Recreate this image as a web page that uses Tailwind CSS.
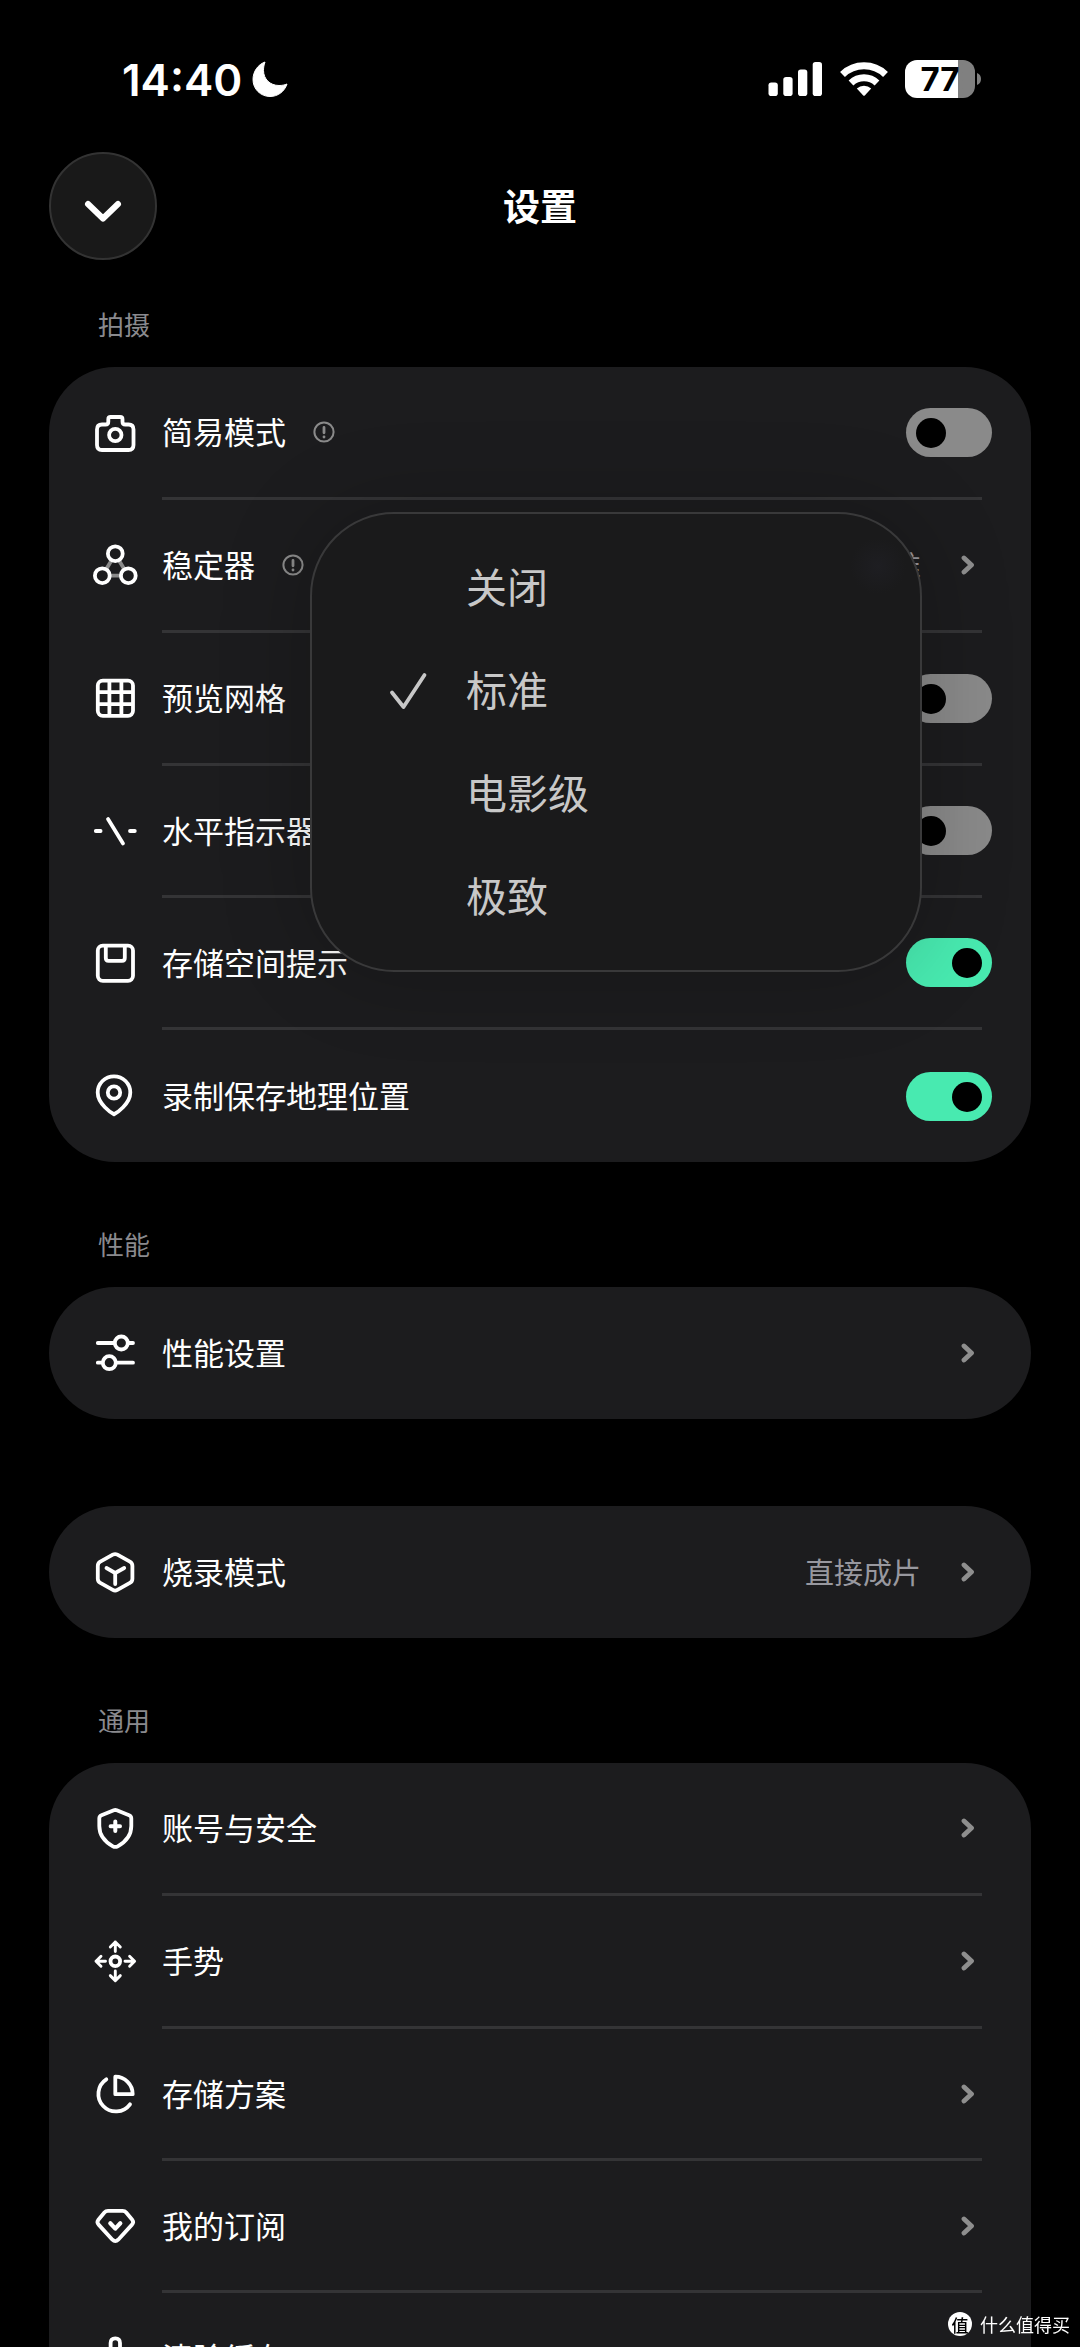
<!DOCTYPE html>
<html lang="zh-CN">
<head>
    <meta charset="UTF-8">
    <meta name="viewport" content="width=device-width, initial-scale=1.0">
    <title>设置</title>
    <script src="https://cdn.jsdelivr.net/npm/@tailwindcss/browser@4"></script>
</head>
<body class="h-screen overflow-hidden bg-black text-white font-['Noto_Sans_CJK_SC',sans-serif]">
    <!-- Shared icons -->
    <svg class="hidden">
        <symbol id="chevron" viewBox="0 0 14 20">
            <path d="M3 3l7.5 7L3 17" fill="none" stroke="currentColor" stroke-width="4.8" stroke-linecap="round" stroke-linejoin="round"/>
        </symbol>
        <symbol id="info" viewBox="0 0 22 22">
            <circle cx="11" cy="11" r="9.6" fill="none" stroke="currentColor" stroke-width="2"/>
            <path d="M11 6.4v5.4M11 15.8v.2" fill="none" stroke="currentColor" stroke-width="2.8" stroke-linecap="round"/>
        </symbol>
    </svg>

    <!-- Status bar -->
    <div class="flex h-38 items-center justify-between pt-1.5 pl-[122px] pr-[99px]">
        <div class="flex items-center gap-2.5">
            <span class="pt-0.5 font-['Inter',sans-serif] text-[44px] leading-none font-semibold">14:40</span>
            <svg class="size-9" viewBox="0 0 36 36" fill="currentColor">
                <path d="M13 1C12 4 11.500 6 11.500 9.500C11.500 18 18 24.500 27 24.500C30 24.500 32.500 24 35 23C32.500 30.500 26 35.500 18 35.500C8.500 35.500 1 28 1 18.500C1 10.500 6 3.500 13 1Z" stroke="currentColor" stroke-width="1" stroke-linejoin="round"/>
            </svg>
        </div>
        <div class="flex items-center gap-[17px]">
            <svg class="h-[36px] w-[55px]" viewBox="0 0 55 36" fill="currentColor">
                <rect x="0.500" y="21.500" width="9.300" height="13.500" rx="2.800"/>
                <rect x="15.300" y="16" width="9.300" height="19" rx="2.800"/>
                <rect x="30" y="8.500" width="9.300" height="26.500" rx="2.800"/>
                <rect x="44.700" y="1" width="9.300" height="34" rx="2.800"/>
            </svg>
            <svg class="h-[36px] w-[48px]" viewBox="0 0 48 36">
                <g fill="none" stroke="currentColor" stroke-width="7">
                    <path d="M2.500 13.500A31 31 0 0 1 45.500 13.500"/>
                    <path d="M11 22A19 19 0 0 1 37 22"/>
                </g>
                <path d="M16.800 27.500A11 11 0 0 1 31.200 27.500L25 34.200Q24 35.200 23 34.200Z" fill="currentColor"/>
            </svg>
            <div class="flex items-center gap-0.5">
                <div class="flex h-[38px] w-[70px] items-center justify-center rounded-[12px] bg-linear-to-r from-white from-76% to-[#808080] to-76% font-['Inter',sans-serif] text-[33px] leading-none font-bold text-black">77</div>
                <svg class="h-3 w-1" viewBox="0 0 4 12"><path d="M0 0Q4 1.500 4 6T0 12Z" fill="#808080"/></svg>
            </div>
        </div>
    </div>

    <!-- Header -->
    <header class="grid grid-cols-3 items-center px-[49px]">
        <button type="button" aria-label="返回" class="flex size-27 items-center justify-center rounded-full border-2 border-[#333333] bg-[#191919]">
            <svg class="size-12" viewBox="0 0 48 48" fill="none" stroke="currentColor" stroke-width="6" stroke-linecap="round" stroke-linejoin="round">
                <path d="M9 22l15 14.500L39 22"/>
            </svg>
        </button>
        <h1 class="pb-0.5 text-center text-[37px] leading-[54px] font-bold">设置</h1>
    </header>

    <main class="px-[49px]">
        <!-- Capture -->
        <h2 class="mt-[44px] mb-[23px] pl-[49px] text-[26px] leading-[40px] text-[#8a8a8e]">拍摄</h2>
        <section class="relative rounded-[66px] bg-[#1c1c1e]">
            <div class="flex h-[130px] items-center pl-[42px] pr-[39px]">
                <svg class="mr-[23px] size-12" viewBox="0 0 48 48" fill="none" stroke="currentColor" stroke-width="3.8" stroke-linejoin="round">
                    <path d="M11 16.500h3.500q2.800 0 2.800-2.800v-2.400q0-2.300 2.300-2.300h9.600q2.300 0 2.300 2.300v2.400q0 2.800 2.800 2.800H37.500q5 0 5 5V37q0 5-5 5H11q-5 0-5-5V21.500q0-5 5-5Z"/>
                    <circle cx="24.300" cy="27" r="6.200"/>
                </svg>
                <label for="simple-mode" class="pb-0.5 text-[31px] leading-[46px]">简易模式</label>
                <svg class="ml-[27px] size-[22px] text-[#8a8a8a]"><use href="#info"/></svg>
                <input id="simple-mode" type="checkbox" role="switch" class="relative ml-auto h-[49px] w-[86px] appearance-none rounded-full bg-[#8a8a8a] before:absolute before:top-[10px] before:left-[10px] before:size-[30px] before:rounded-full before:bg-black checked:bg-[#48eab0] checked:before:left-[46px]">
            </div>
            <hr class="ml-[113px] mr-[49px] border-t-3 border-[#343436]">
            <a href="#" class="flex h-[130px] items-center pl-[42px] pr-[56px]">
                <svg class="mr-[23px] size-12" viewBox="0 0 48 48" fill="none" stroke="currentColor" stroke-width="3.8">
                    <path d="M20.500 19.500l-5.500 9M28 19.500l5.500 9M19 34.700h10.500" stroke="#8a8a8a"/>
                    <circle cx="24.300" cy="12.700" r="7.400"/>
                    <circle cx="11.300" cy="34.700" r="7.400"/>
                    <circle cx="37.300" cy="34.700" r="7.400"/>
                </svg>
                <span class="pb-0.5 text-[31px] leading-[46px]">稳定器</span>
                <svg class="ml-[27px] size-[22px] text-[#8a8a8a]"><use href="#info"/></svg>
                <span class="ml-auto pb-0.5 text-[29px] leading-[42px] text-[#98989f]">标准</span>
                <svg class="ml-[40px] h-5 w-3.5 text-[#8e8e8e]"><use href="#chevron"/></svg>
            </a>
            <hr class="ml-[113px] mr-[49px] border-t-3 border-[#343436]">
            <div class="flex h-[130px] items-center pl-[42px] pr-[39px]">
                <svg class="mr-[23px] size-12" viewBox="0 0 48 48" fill="none" stroke="currentColor" stroke-width="3.8">
                    <rect x="6.800" y="6.600" width="35.200" height="35.200" rx="5"/>
                    <path d="M18.400 6v36M30.400 6v36M6 18.200h36M6 30.200h36"/>
                </svg>
                <label for="grid" class="pb-0.5 text-[31px] leading-[46px]">预览网格</label>
                <input id="grid" type="checkbox" role="switch" class="relative ml-auto h-[49px] w-[86px] appearance-none rounded-full bg-[#8a8a8a] before:absolute before:top-[10px] before:left-[10px] before:size-[30px] before:rounded-full before:bg-black checked:bg-[#48eab0] checked:before:left-[46px]">
            </div>
            <hr class="ml-[113px] mr-[49px] border-t-3 border-[#343436]">
            <div class="flex h-[129px] items-center pl-[42px] pr-[39px]">
                <svg class="mr-[23px] size-12" viewBox="0 0 48 48" fill="none" stroke="currentColor" stroke-width="3.800" stroke-linecap="round">
                    <path d="M4.800 24h4.800M39 24h4.800M17 12l15 24.500"/>
                </svg>
                <label for="level" class="pb-0.5 text-[31px] leading-[46px]">水平指示器</label>
                <input id="level" type="checkbox" role="switch" class="relative ml-auto h-[49px] w-[86px] appearance-none rounded-full bg-[#8a8a8a] before:absolute before:top-[10px] before:left-[10px] before:size-[30px] before:rounded-full before:bg-black checked:bg-[#48eab0] checked:before:left-[46px]">
            </div>
            <hr class="ml-[113px] mr-[49px] border-t-3 border-[#343436]">
            <div class="flex h-[129px] items-center pl-[42px] pr-[39px]">
                <svg class="mr-[23px] size-12" viewBox="0 0 48 48" fill="none" stroke="currentColor" stroke-width="3.800" stroke-linejoin="round">
                    <rect x="6.800" y="6.600" width="35.200" height="35.200" rx="5"/>
                    <path d="M14.800 7v12q0 2.800 2.800 2.800h13.400q2.800 0 2.800-2.800V7"/>
                </svg>
                <label for="storage-tip" class="pb-0.5 text-[31px] leading-[46px]">存储空间提示</label>
                <input id="storage-tip" type="checkbox" role="switch" checked class="relative ml-auto h-[49px] w-[86px] appearance-none rounded-full bg-[#8a8a8a] before:absolute before:top-[10px] before:left-[10px] before:size-[30px] before:rounded-full before:bg-black checked:bg-[#48eab0] checked:before:left-[46px]">
            </div>
            <hr class="ml-[113px] mr-[49px] border-t-3 border-[#343436]">
            <div class="flex h-[132px] items-center pl-[42px] pr-[39px]">
                <svg class="mr-[23px] size-12" viewBox="0 0 48 48" fill="none" stroke="currentColor" stroke-width="3.800" stroke-linejoin="round">
                    <path d="M23 42.300C20.500 41 6.700 32 6.700 20.500C6.700 11.500 14 4.300 23 4.300S39.300 11.500 39.300 20.500C39.300 32 25.500 41 23 42.300Z"/>
                    <circle cx="23" cy="20.500" r="6.200"/>
                </svg>
                <label for="location" class="pb-0.5 text-[31px] leading-[46px]">录制保存地理位置</label>
                <input id="location" type="checkbox" role="switch" checked class="relative ml-auto h-[49px] w-[86px] appearance-none rounded-full bg-[#8a8a8a] before:absolute before:top-[10px] before:left-[10px] before:size-[30px] before:rounded-full before:bg-black checked:bg-[#48eab0] checked:before:left-[46px]">
            </div>

            <!-- Stabilizer menu -->
            <div role="menu" class="absolute top-[145px] right-[109px] flex w-[612px] flex-col rounded-[84px] border-2 border-[#39393a] bg-[#1a1a1b] bg-[radial-gradient(circle_at_566px_52px,#1e1e22_0,#1a1a1b_28px)] py-[22px] text-[41px] leading-[60px] text-[#c8c8c8] shadow-[0_0_90px_rgba(0,0,0,0.22)]">
                <button type="button" role="menuitemradio" aria-checked="false" class="flex h-[103px] items-center pl-[154px]"><span class="pb-1.5">关闭</span></button>
                <button type="button" role="menuitemradio" aria-checked="true" class="flex h-[103px] items-center pl-[76px]">
                    <svg class="mr-[38px] size-10" viewBox="0 0 40 40" fill="none" stroke="currentColor" stroke-width="3.800" stroke-linecap="round" stroke-linejoin="round">
                        <path d="M4 21.500L15.500 36L36.500 4"/>
                    </svg>
                    <span class="pb-1.5">标准</span>
                </button>
                <button type="button" role="menuitemradio" aria-checked="false" class="flex h-[103px] items-center pl-[154px]"><span class="pb-1.5">电影级</span></button>
                <button type="button" role="menuitemradio" aria-checked="false" class="flex h-[103px] items-center pl-[154px]"><span class="pb-1.5">极致</span></button>
            </div>
        </section>

        <!-- Performance -->
        <h2 class="mt-[62px] mb-[23px] pl-[49px] text-[26px] leading-[40px] text-[#8a8a8e]">性能</h2>
        <section class="rounded-[66px] bg-[#1c1c1e]">
            <a href="#" class="flex h-[132px] items-center pl-[42px] pr-[56px]">
                <svg class="mr-[23px] size-12" viewBox="0 0 48 48" fill="none" stroke="currentColor" stroke-width="3.800" stroke-linecap="round">
                    <path d="M6.800 14h16.500M37 14h5M6.800 33.700h4.500M25 33.700h17"/>
                    <circle cx="30.300" cy="14" r="6.500"/>
                    <circle cx="18.300" cy="33.700" r="6.500"/>
                </svg>
                <span class="pb-0.5 text-[31px] leading-[46px]">性能设置</span>
                <svg class="ml-auto h-5 w-3.5 text-[#8e8e8e]"><use href="#chevron"/></svg>
            </a>
        </section>

        <section class="mt-[87px] rounded-[66px] bg-[#1c1c1e]">
            <a href="#" class="flex h-[132px] items-center pl-[42px] pr-[56px]">
                <svg class="mr-[23px] size-12" viewBox="0 0 48 48" fill="none" stroke="currentColor" stroke-width="3.800" stroke-linecap="round" stroke-linejoin="round">
                    <path d="M21.800 6.700q2.300-1.300 4.600 0l12.500 7q2.500 1.400 2.500 4.200v12.800q0 2.800-2.500 4.200l-12.500 7q-2.300 1.300-4.600 0l-12.500-7q-2.500-1.400-2.500-4.200V17.900q0-2.800 2.500-4.200Z"/>
                    <path d="M15.500 20l8.700 5 9-5M24.200 25v11"/>
                </svg>
                <span class="pb-0.5 text-[31px] leading-[46px]">烧录模式</span>
                <span class="ml-auto pb-0.5 text-[29px] leading-[42px] text-[#98989f]">直接成片</span>
                <svg class="ml-[40px] h-5 w-3.5 text-[#8e8e8e]"><use href="#chevron"/></svg>
            </a>
        </section>

        <!-- General -->
        <h2 class="mt-[62px] mb-[23px] pl-[49px] text-[26px] leading-[40px] text-[#8a8a8e]">通用</h2>
        <section class="rounded-[66px] bg-[#1c1c1e]">
            <a href="#" class="flex h-[130px] items-center pl-[42px] pr-[56px]">
                <svg class="mr-[23px] size-12" viewBox="0 0 48 48" fill="none" stroke="currentColor" stroke-width="3.800" stroke-linecap="round" stroke-linejoin="round">
                    <path d="M22.800 6.300q1.500-.6 3 0l12.300 4.900q2.200.9 2.200 3.300V22c0 10-5.500 15.800-13.600 20.300q-2.400 1.300-4.800 0C13.800 37.800 8.300 32 8.300 22v-7.500q0-2.400 2.200-3.300Z"/>
                    <path d="M24.300 17.500v9.400M19.600 22.200h9.400" stroke-width="4"/>
                </svg>
                <span class="pb-0.5 text-[31px] leading-[46px]">账号与安全</span>
                <svg class="ml-auto h-5 w-3.5 text-[#8e8e8e]"><use href="#chevron"/></svg>
            </a>
            <hr class="ml-[113px] mr-[49px] border-t-3 border-[#343436]">
            <a href="#" class="flex h-[130px] items-center pl-[42px] pr-[56px]">
                <svg class="mr-[23px] size-12" viewBox="0 0 48 48" fill="none" stroke="currentColor" stroke-width="2.900" stroke-linecap="round" stroke-linejoin="round">
                    <circle cx="24.300" cy="24.300" r="4.800" stroke-width="3.800"/>
                    <path d="M24.300 14.500V5M19.300 10l5-5 5 5M24.300 34v9.500M19.300 38.600l5 5 5-5M14.500 24.300H5M10 19.300l-5 5 5 5M34 24.300h9.500M38.600 19.300l5 5-5 5"/>
                </svg>
                <span class="pb-0.5 text-[31px] leading-[46px]">手势</span>
                <svg class="ml-auto h-5 w-3.5 text-[#8e8e8e]"><use href="#chevron"/></svg>
            </a>
            <hr class="ml-[113px] mr-[49px] border-t-3 border-[#343436]">
            <a href="#" class="flex h-[129px] items-center pl-[42px] pr-[56px]">
                <svg class="mr-[23px] size-12" viewBox="0 0 48 48" fill="none" stroke="currentColor" stroke-width="3.800" stroke-linecap="round" stroke-linejoin="round">
                    <path d="M15.300 9.300A17.500 17.500 0 1 0 39 34.300"/>
                    <path d="M24.300 6.700C34 6.700 41.700 14.500 41.700 24.200H24.300Z"/>
                </svg>
                <span class="pb-0.5 text-[31px] leading-[46px]">存储方案</span>
                <svg class="ml-auto h-5 w-3.5 text-[#8e8e8e]"><use href="#chevron"/></svg>
            </a>
            <hr class="ml-[113px] mr-[49px] border-t-3 border-[#343436]">
            <a href="#" class="flex h-[129px] items-center pl-[42px] pr-[56px]">
                <svg class="mr-[23px] size-12" viewBox="0 0 48 48" fill="none" stroke="currentColor" stroke-width="3.800" stroke-linecap="round" stroke-linejoin="round">
                    <path d="M17 8.800h14.600q2.200 0 3.600 1.700l6 7.300q2 2.500-.2 4.800L27.200 37.700q-2.900 2.900-5.800 0L7.600 22.600q-2.200-2.300-.2-4.800l6-7.300q1.400-1.700 3.600-1.700Z"/>
                    <path d="M19.300 21.300l5 5.300 5-5.300" stroke-width="4.200"/>
                </svg>
                <span class="pb-0.5 text-[31px] leading-[46px]">我的订阅</span>
                <svg class="ml-auto h-5 w-3.5 text-[#8e8e8e]"><use href="#chevron"/></svg>
            </a>
            <hr class="ml-[113px] mr-[49px] border-t-3 border-[#343436]">
            <a href="#" class="flex h-[130px] items-center pl-[42px] pr-[56px]">
                <svg class="mr-[23px] size-12" viewBox="0 0 48 48" fill="none" stroke="currentColor" stroke-width="3.800" stroke-linecap="round" stroke-linejoin="round">
                    <path d="M19.600 18V9q0-4.700 4.700-4.700T29 9v9H39v8H9.500v-8ZM12 26L8 42h32l-4-16"/>
                </svg>
                <span class="pb-0.5 text-[31px] leading-[46px]">清除缓存</span>
                <svg class="ml-auto h-5 w-3.5 text-[#8e8e8e]"><use href="#chevron"/></svg>
            </a>
        </section>
    </main>

    <!-- Source mark -->
    <div class="fixed right-2.5 bottom-2.5 flex items-center gap-2">
        <span class="flex size-6 items-center justify-center rounded-full bg-white text-[17px] leading-none font-medium text-black">值</span>
        <span class="text-[18px] leading-[26px]">什么值得买</span>
    </div>
</body>
</html>
